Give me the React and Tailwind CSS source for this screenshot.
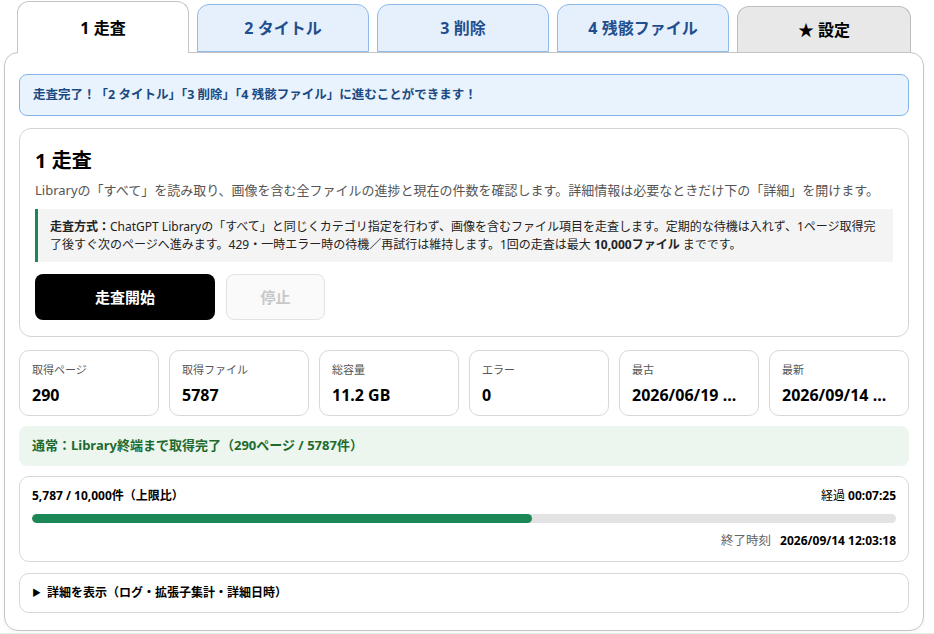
import React from 'react';

const TABS = [
    { id: 'scan', label: '1 走査' },
    { id: 'title', label: '2 タイトル' },
    { id: 'delete', label: '3 削除' },
    { id: 'orphan', label: '4 残骸ファイル' },
];

const STATS = [
    { label: '取得ページ', value: '290' },
    { label: '取得ファイル', value: '5787' },
    { label: '総容量', value: '11.2 GB' },
    { label: 'エラー', value: '0' },
    { label: '最古', value: '2026/06/19 ...' },
    { label: '最新', value: '2026/09/14 ...' },
];

const App = () => {
    const done = 5787;
    const limit = 10000;
    const pct = (done / limit) * 100;

    return (
        <div className="min-h-screen bg-white text-black font-['Noto_Sans','Noto_Sans_CJK_JP',sans-serif] pt-[1px] pb-[4px]">
            {/* Tabs */}
            <div className="flex items-end gap-[8px] pl-[17px] h-[51px] relative z-10">
                {TABS.map((tab, i) => (
                    i === 0 ? (
                        <div key={tab.id} className="w-[172px] h-[52px] -mb-[1px] bg-white border border-b-0 border-[#c4c4c4] rounded-t-[12px] flex items-center justify-center text-[16px] font-bold">
                            {tab.label}
                        </div>
                    ) : (
                        <div key={tab.id} className="w-[172px] h-[48px] bg-[#e6f0fd] border border-[#8fb9ea] rounded-t-[12px] flex items-center justify-center text-[16px] font-bold text-[#1f4f8d]">
                            {tab.label}
                        </div>
                    )
                ))}
                <div className="w-[174px] h-[46px] bg-[#e8e8e8] border border-b-0 border-[#bdbdbd] rounded-t-[12px] flex items-center justify-center text-[16px] font-bold">
                    ★ 設定
                </div>
            </div>

            {/* Panel */}
            <div className="ml-[4px] w-[920px] h-[579px] border border-[#c4c4c4] rounded-[14px] px-[14px] pt-[21px] flex flex-col gap-[11px] shadow-[0_2px_4px_rgba(0,0,0,0.04)]">
                <div className="h-[42px] bg-[#e9f3fe] border border-[#86b5ea] rounded-[8px] flex items-center px-[13px] text-[12.5px] font-bold text-[#1b4a82]">
                    走査完了！「2 タイトル」「3 削除」「4 残骸ファイル」に進むことができます！
                </div>

                {/* Scan card */}
                <div className="border border-[#d4d4d4] rounded-[12px] px-[15px] pt-[18px] pb-[16px] mt-[1px]">
                    <h2 className="text-[20px] font-bold leading-[28px]">1 走査</h2>
                    <p className="mt-[6px] text-[13px] text-[#555] leading-[18px]">
                        Libraryの「すべて」を読み取り、画像を含む全ファイルの進捗と現在の件数を確認します。詳細情報は必要なときだけ下の「詳細」を開けます。
                    </p>
                    <div className="mt-[10px] bg-[#f4f4f4] border-l-[3px] border-[#1b8757] pl-[12px] pr-[10px] pt-[9px] pb-[8px] text-[12px] leading-[18px] text-[#222]">
                        <b>走査方式：</b>ChatGPT Libraryの「すべて」と同じくカテゴリ指定を行わず、画像を含むファイル項目を走査します。定期的な待機は入れず、1ページ取得完了後すぐ次のページへ進みます。429・一時エラー時の待機／再試行は維持します。1回の走査は最大 <b>10,000ファイル</b> までです。
                    </div>
                    <div className="mt-[12px] flex gap-[11px]">
                        <button className="w-[180px] h-[46px] bg-black text-white rounded-[8px] text-[15px] font-bold">
                            走査開始
                        </button>
                        <button disabled className="w-[99px] h-[46px] bg-[#fafafa] border border-[#e2e2e2] text-[#c8c8c8] rounded-[8px] text-[15px] font-bold">
                            停止
                        </button>
                    </div>
                </div>

                {/* Stats */}
                <div className="grid grid-cols-6 gap-[10px] mt-[2px]">
                    {STATS.map(s => (
                        <div key={s.label} className="h-[66px] border border-[#d8d8d8] rounded-[10px] px-[12px] pt-[11px]">
                            <div className="text-[11px] text-[#555] leading-[16px]">{s.label}</div>
                            <div className="mt-[7px] text-[16px] font-bold leading-[20px] whitespace-nowrap overflow-hidden">{s.value}</div>
                        </div>
                    ))}
                </div>

                {/* Status */}
                <div className="h-[40px] bg-[#ecf6ee] rounded-[8px] flex items-center px-[13px] text-[13px] font-bold text-[#1e6a2e] -mt-[1px]">
                    通常：Library終端まで取得完了（290ページ / 5787件）
                </div>

                {/* Progress */}
                <div className="border border-[#d8d8d8] rounded-[10px] px-[12px] pt-[10px] pb-[11px] -mt-[1px]">
                    <div className="flex justify-between text-[12px] leading-[18px]">
                        <span className="font-bold">5,787 / 10,000件（上限比）</span>
                        <span>経過 <b>00:07:25</b></span>
                    </div>
                    <div className="mt-[9px] h-[9px] bg-[#e3e3e3] rounded-full overflow-hidden">
                        <div className="h-full bg-[#1b8757] rounded-full" style={{ width: `${pct}%` }} />
                    </div>
                    <div className="mt-[9px] flex justify-end text-[12px] leading-[18px]">
                        <span className="text-[#666] mr-[9px] text-[12.5px]">終了時刻</span>
                        <b>2026/09/14 12:03:18</b>
                    </div>
                </div>

                {/* Details */}
                <div className="h-[40px] border border-[#d8d8d8] rounded-[10px] flex items-center px-[12px] text-[12px] font-bold">
                    <span className="text-[9px] mr-[6px]">▶</span>
                    詳細を表示（ログ・拡張子集計・詳細日時）
                </div>
            </div>
            <div className="h-[3px] bg-[#e3f3e3] mt-[2px]" />
        </div>
    );
};

export default App;
